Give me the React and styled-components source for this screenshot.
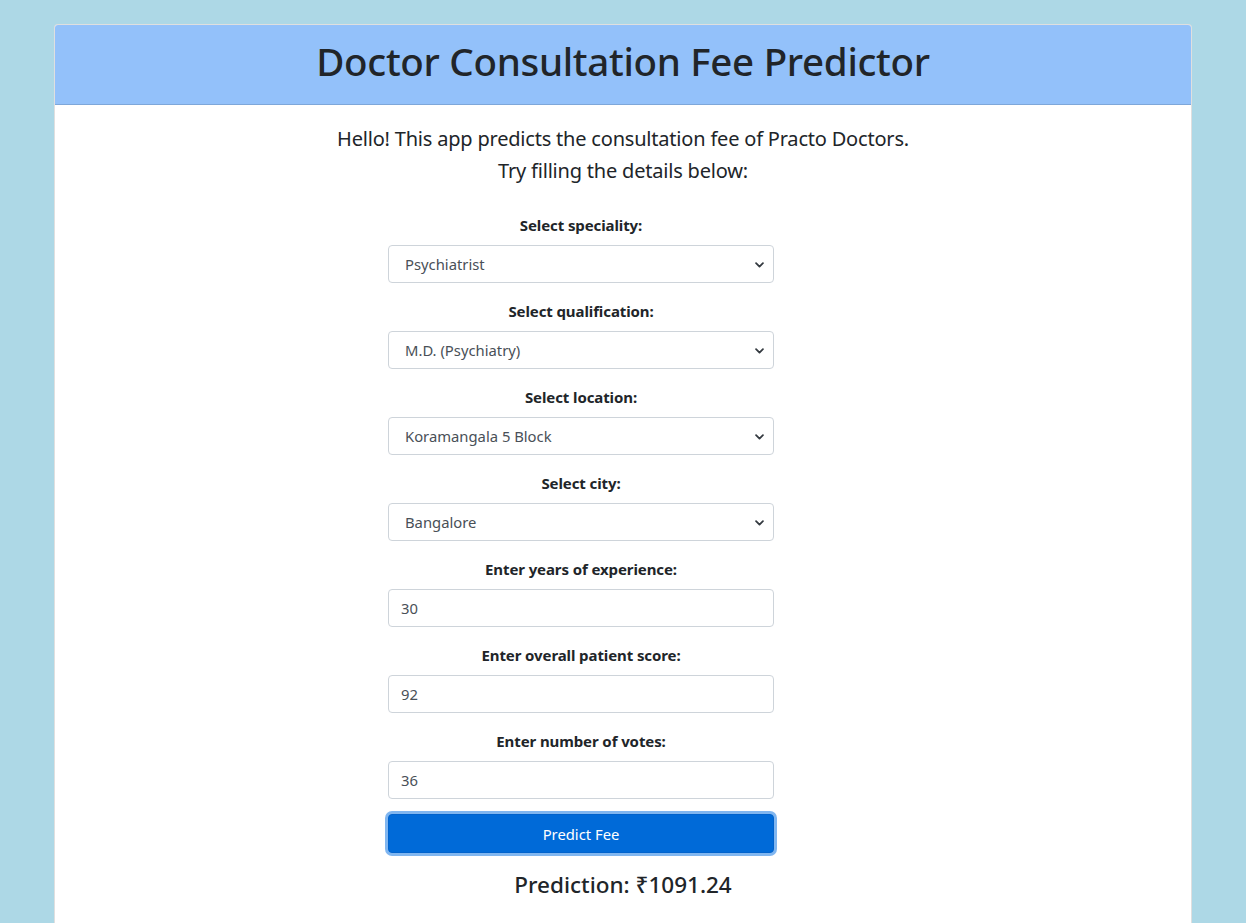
import { createGlobalStyle, styled } from "styled-components";

const GlobalStyle = createGlobalStyle`
  html, body {
    margin: 0;
    padding: 0;
    background-color: #add8e6;
    font-family: "Noto Sans", "Open Sans", sans-serif;
    color: #212529;
  }
`;

const Page = styled.div`
  padding: 24px 54px 0 54px;
  min-height: 923px;
  box-sizing: border-box;
`;

const Card = styled.div`
  background-color: white;
  border: 1px solid rgba(0, 0, 0, 0.125);
  border-radius: 4px;
  min-height: 910px;
  overflow: hidden;
`;

const CardHeader = styled.div`
  background-color: #93c1fa;
  border-bottom: 1px solid #7ea7d9;
  height: 80px;
  box-sizing: border-box;
  padding-bottom: 8px;
  display: flex;
  align-items: center;
  justify-content: center;
`;

const Title = styled.h1`
  margin: 0;
  font-size: 38.5px;
  font-weight: 500;
  letter-spacing: -0.3px;
`;

const CardBody = styled.div`
  padding: 18px 16px 16px 16px;
`;

const Intro = styled.p`
  margin: 0;
  text-align: center;
  font-size: 20px;
  line-height: 32px;
  letter-spacing: -0.2px;
`;

const Form = styled.form`
  width: 386px;
  margin: 26px 0 0 317px;
  display: flex;
  flex-direction: column;
`;

const Group = styled.div`
  display: flex;
  flex-direction: column;
  margin-bottom: 16px;
`;

const Label = styled.label`
  text-align: center;
  font-weight: 700;
  font-size: 15px;
  line-height: 24px;
  margin-bottom: 8px;
  letter-spacing: -0.1px;
`;

const fieldCss = `
  box-sizing: border-box;
  width: 100%;
  height: 38px;
  font-family: "Noto Sans", "Open Sans", sans-serif;
  font-size: 14.8px;
  color: #495057;
  background-color: white;
  border: 1px solid #ced4da;
  border-radius: 4px;
  outline: none;
`;

const Select = styled.select`
  ${fieldCss}
  padding: 0 16px;
  appearance: none;
  background-image: url("data:image/svg+xml,%3csvg xmlns='http://www.w3.org/2000/svg' viewBox='0 0 16 16'%3e%3cpath fill='none' stroke='%23343a40' stroke-linecap='round' stroke-linejoin='round' stroke-width='2.6' d='M3 6l5 5 5-5'/%3e%3c/svg%3e");
  background-repeat: no-repeat;
  background-position: right 8px center;
  background-size: 11px 11px;
`;

const Input = styled.input`
  ${fieldCss}
  padding: 0 12px;
`;

const Button = styled.button`
  height: 39px;
  margin-top: -1px;
  width: 100%;
  background-color: #006ad8;
  color: white;
  border: 1px solid #0062cc;
  border-radius: 4px;
  font-family: "Noto Sans", "Open Sans", sans-serif;
  font-size: 14.8px;
  box-shadow: 0 0 0 3px #80b6f0;
  cursor: pointer;
`;

const Prediction = styled.h4`
  margin: 18px 0 0 0;
  text-align: center;
  font-size: 22.5px;
  font-weight: 500;
  line-height: 28px;
`;

const selects = [
  { label: "Select speciality:", value: "Psychiatrist" },
  { label: "Select qualification:", value: "M.D. (Psychiatry)" },
  { label: "Select location:", value: "Koramangala 5 Block" },
  { label: "Select city:", value: "Bangalore" },
];

const inputs = [
  { label: "Enter years of experience:", value: "30" },
  { label: "Enter overall patient score:", value: "92" },
  { label: "Enter number of votes:", value: "36" },
];

export default function App() {
  return (
    <Page>
      <GlobalStyle />
      <Card>
        <CardHeader>
          <Title>Doctor Consultation Fee Predictor</Title>
        </CardHeader>
        <CardBody>
          <Intro>Hello! This app predicts the consultation fee of Practo Doctors.</Intro>
          <Intro>Try filling the details below:</Intro>
          <Form onSubmit={(e) => e.preventDefault()}>
            {selects.map((s) => (
              <Group key={s.label}>
                <Label>{s.label}</Label>
                <Select defaultValue={s.value}>
                  <option>{s.value}</option>
                </Select>
              </Group>
            ))}
            {inputs.map((f) => (
              <Group key={f.label}>
                <Label>{f.label}</Label>
                <Input type="number" defaultValue={f.value} />
              </Group>
            ))}
            <Button type="submit">Predict Fee</Button>
          </Form>
          <Prediction>Prediction: ₹1091.24</Prediction>
        </CardBody>
      </Card>
    </Page>
  );
}
